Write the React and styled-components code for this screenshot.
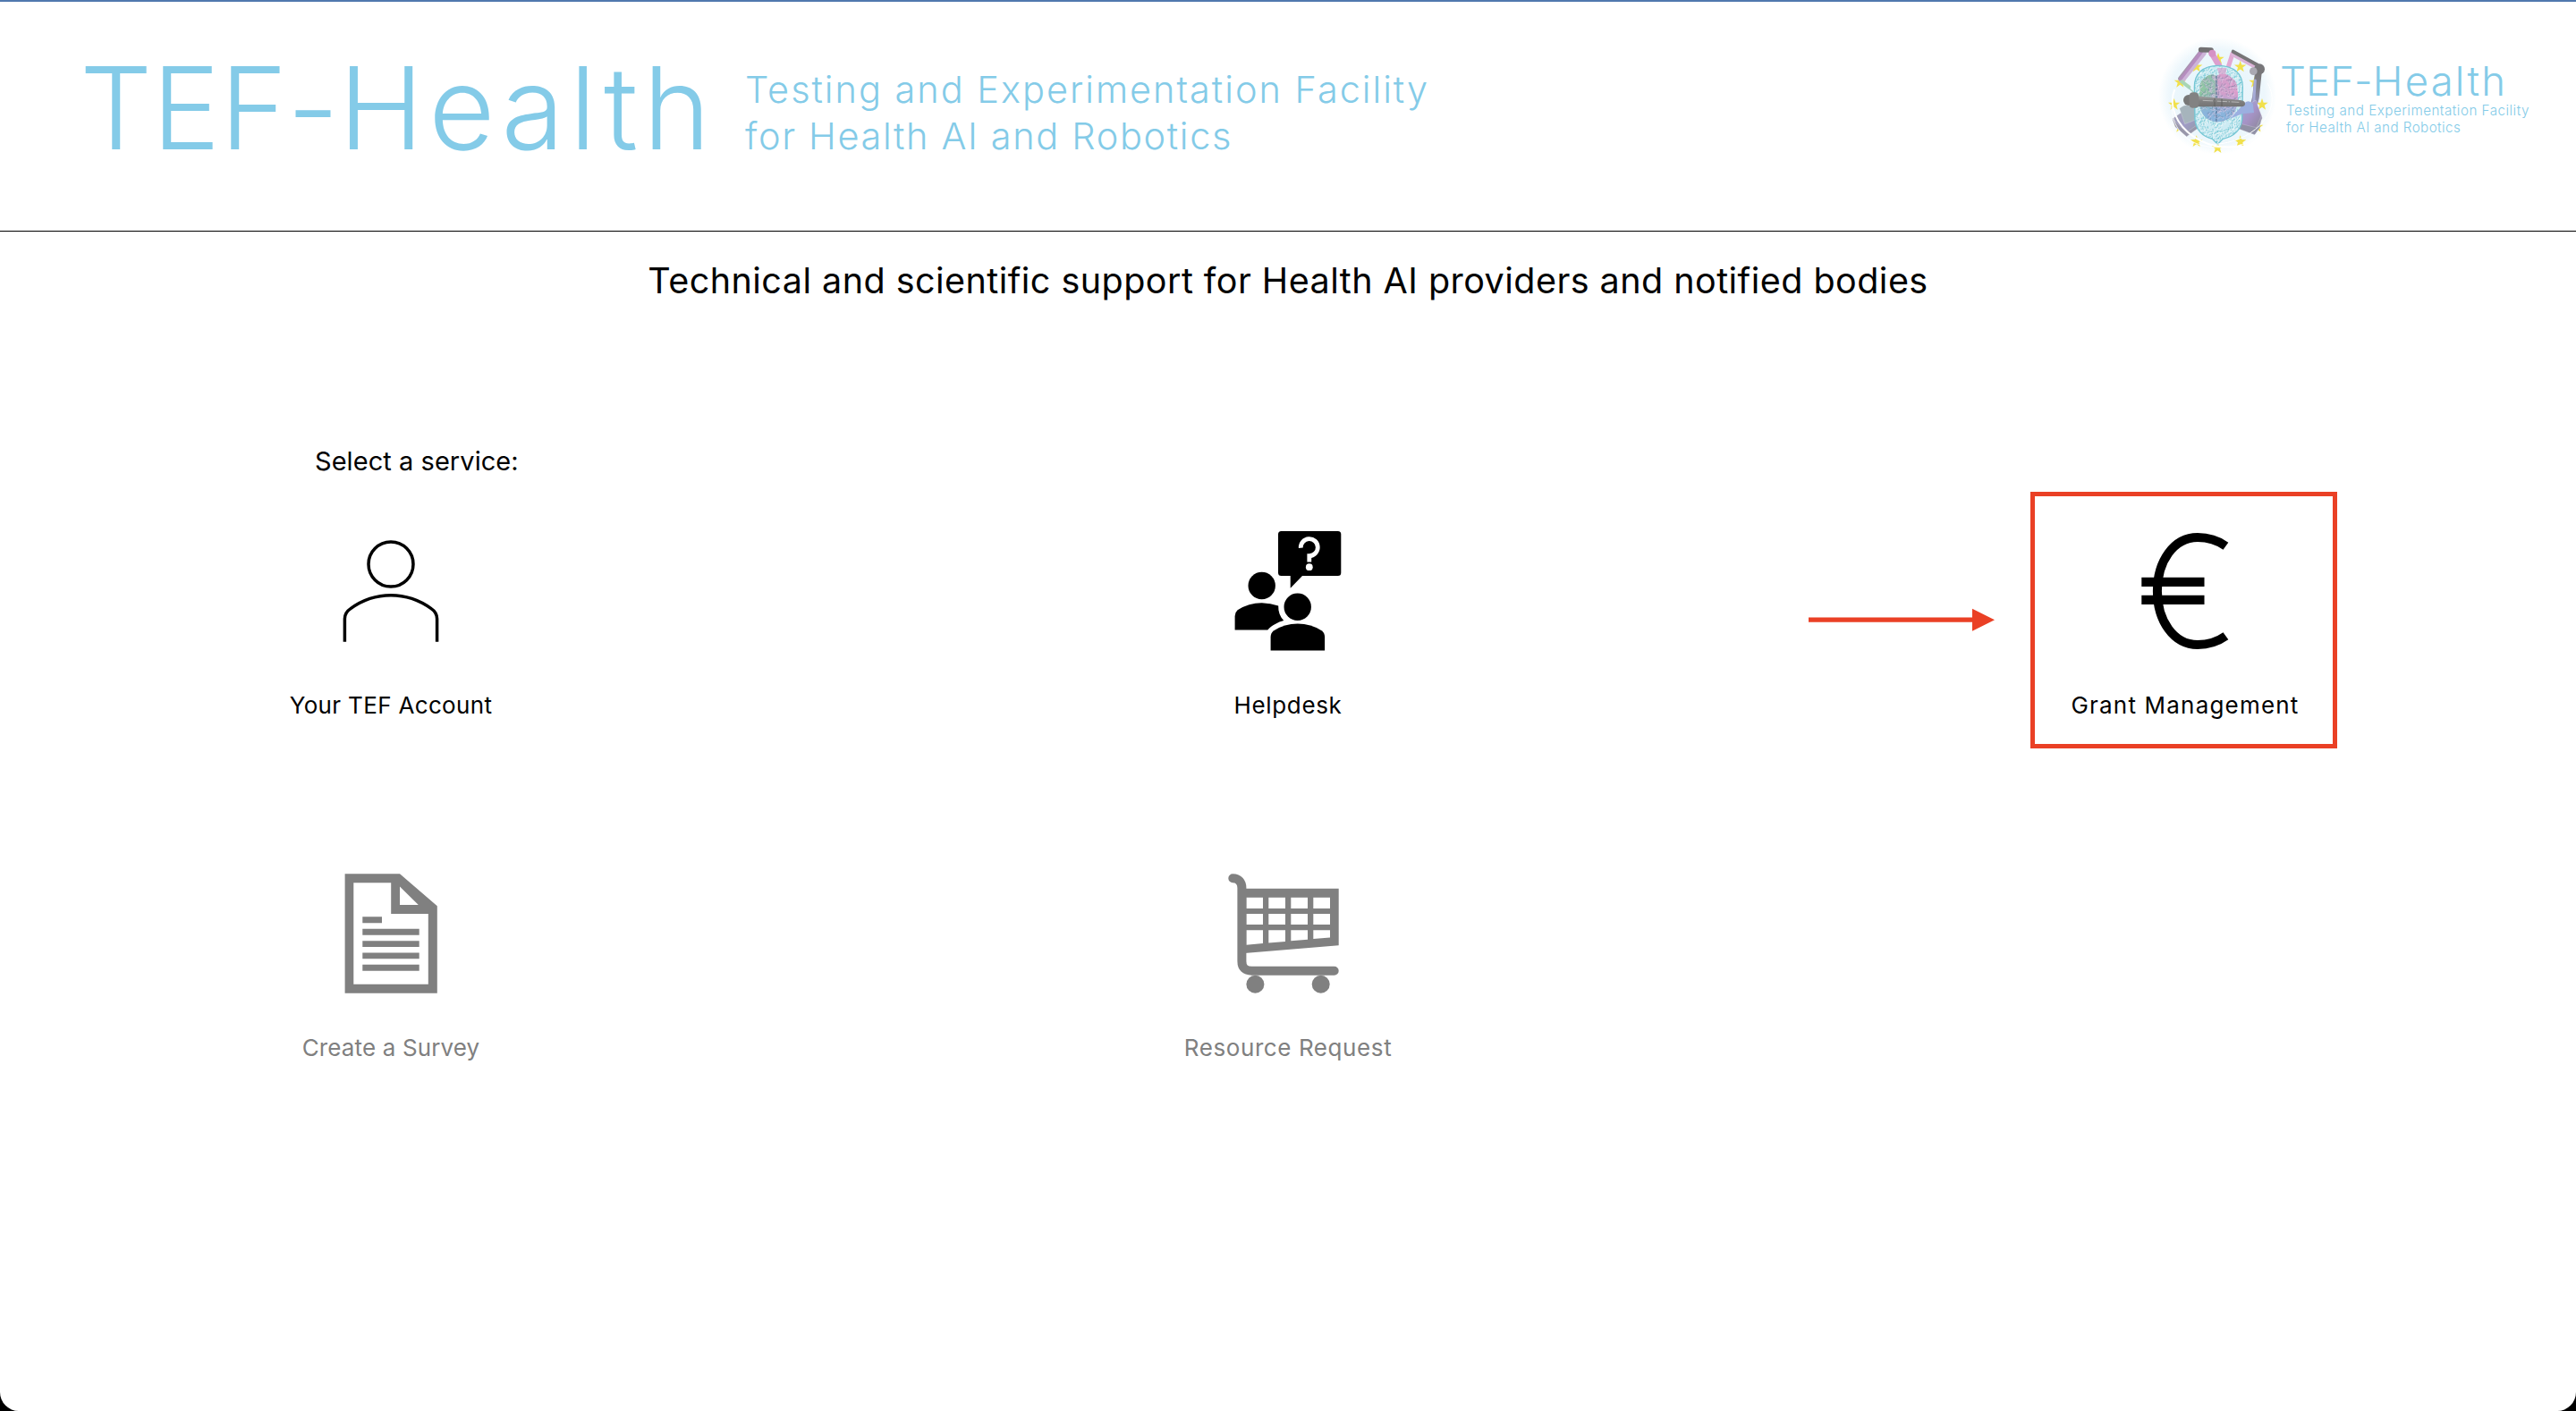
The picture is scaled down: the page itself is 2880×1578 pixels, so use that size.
import React from "react";
import styled, { createGlobalStyle } from "styled-components";

const GlobalStyle = createGlobalStyle`
  * { box-sizing: border-box; }
  body { margin: 0; background: #000; }
`;

const Page = styled.div`
  height: 1578px;
  overflow: hidden;
  background: #fff;
  border-top: 2px solid #5078ae;
  border-radius: 0 0 21px 21px;
  color: #000;
  font-family: Inter, "Liberation Sans", sans-serif;
`;

const Header = styled.header`
  display: flex;
  justify-content: space-between;
  align-items: flex-start;
  height: 257px;
  padding: 38px 50px 0 89px;
  border-bottom: 1px solid #000;
  color: #84cbe8;
  font-weight: 300;
  white-space: nowrap;
`;

const Brand = styled.div`
  display: flex;
  padding-top: 17px;
`;

const Wordmark = styled.div`
  width: 744px;
  font-size: 128px;
  line-height: 128px;
`;

const Tracked = styled.span`
  letter-spacing: ${(p) => p.$track}px;
`;

const Tagline = styled.div`
  padding-top: 17px;
  font-size: 41.5px;
  line-height: 52px;
`;

const Line = styled.div`
  letter-spacing: ${(p) => p.$track}px;
`;

const Logo = styled.div`
  display: flex;
  flex: 0 0 420px;
`;

const EmblemSvg = styled.svg`
  flex: none;
  width: 140px;
  height: 136px;
`;

const LogoText = styled.div`
  padding-top: 28px;
  margin-left: -1px;
`;

const LogoName = styled.div`
  font-size: 45.5px;
  line-height: 46px;
`;

const LogoTagline = styled.div`
  padding: 1px 0 0 7px;
  font-size: 15.2px;
  line-height: 18.7px;
`;

const Title = styled.h1`
  margin: 25px 0 0;
  font-size: 39.5px;
  font-weight: 400;
  line-height: 60px;
  letter-spacing: 0.46px;
  text-align: center;
`;

const Prompt = styled.p`
  margin: 152px 0 0 352px;
  font-size: 29px;
  line-height: 40px;
  letter-spacing: 0.05px;
`;

const Services = styled.main`
  display: grid;
  grid-template-columns: repeat(3, 300px);
  justify-content: space-between;
  row-gap: 156px;
  margin-top: 44px;
  padding: 0 287px;
`;

const Service = styled.div`
  position: relative;
  display: flex;
  flex-direction: column;
  align-items: center;
  gap: 31px;
  color: ${(p) => (p.$disabled ? "#808080" : "#000")};
`;

const ServiceIcon = styled.svg`
  width: 160px;
  height: 160px;
  fill: currentColor;
`;

const Label = styled.div`
  font-size: 26px;
  line-height: 36px;
  letter-spacing: ${(p) => p.$track}px;
  white-space: nowrap;
`;

const Highlight = styled.div`
  position: absolute;
  left: -23px;
  top: -30px;
  width: 343px;
  height: 287px;
  border: 5px solid #ea4025;
`;

const Arrow = styled.svg`
  position: absolute;
  left: -271px;
  top: 100px;
  width: 208px;
  height: 26px;
  fill: #ea4025;
`;

const STARS = [
  [210, 78], [284, 104], [333, 156], [357, 231], [341, 306], [284, 355],
  [208, 376], [137, 355], [82, 306], [62, 231], [82, 156], [137, 104],
];

function star(cx, cy, r) {
  let d = "";
  for (let i = 0; i < 10; i++) {
    const a = -Math.PI / 2 + (i * Math.PI) / 5;
    const q = i % 2 ? r * 0.4 : r;
    d += `${i ? "L" : "M"}${(cx + q * Math.cos(a)).toFixed(1)} ${(cy + q * Math.sin(a)).toFixed(1)}`;
  }
  return d + "Z";
}

function scribble(seed, count, x, y, w, h, size) {
  let s = seed;
  const rnd = () => {
    s = (s * 16807) % 2147483647;
    return s / 2147483647;
  };
  let d = "";
  for (let i = 0; i < count; i++) {
    const px = x + rnd() * w;
    const py = y + rnd() * h;
    d += `M${px.toFixed(1)} ${py.toFixed(1)}q${((rnd() - 0.5) * size).toFixed(1)} ${((rnd() - 0.5) * size).toFixed(1)} ${((rnd() - 0.5) * size).toFixed(1)} ${((rnd() - 0.5) * size).toFixed(1)}`;
  }
  return d;
}

const MESH = scribble(77, 900, 128, 98, 168, 266, 18);
const FOLDS = scribble(1234, 190, 146, 128, 132, 162, 26);
const HEAD =
  "M210 100C158 100 130 128 130 172L132 282C136 318 160 338 190 346L208 364L226 346C262 338 286 316 290 282L292 172C292 128 262 100 210 100Z";
const BRAIN =
  "M204 134C190 126 174 130 166 142C152 146 146 166 148 184C142 206 146 226 150 244C156 270 176 286 204 290C240 288 264 270 270 244C278 226 278 200 275 184C276 160 266 146 254 140C242 126 220 124 204 134Z";

function Emblem() {
  return (
    <EmblemSvg viewBox="0 0 420 408">
      <defs>
        <radialGradient id="halo">
          <stop offset="0" stopColor="#e3f3fb" />
          <stop offset="0.8" stopColor="#edf7fc" />
          <stop offset="1" stopColor="#ffffff" />
        </radialGradient>
        <linearGradient id="armLeft" x1="0" y1="0" x2="0.65" y2="0.6">
          <stop offset="0.35" stopColor="#6c6e6e" />
          <stop offset="0.62" stopColor="#9a9c9e" />
          <stop offset="0.8" stopColor="#b68cc0" />
        </linearGradient>
        <linearGradient id="armRight" x1="0" y1="0" x2="0" y2="1">
          <stop offset="0" stopColor="#777476" />
          <stop offset="0.45" stopColor="#808088" />
          <stop offset="1" stopColor="#9a94c4" />
        </linearGradient>
        <linearGradient id="bar" x1="0" y1="0" x2="0" y2="1">
          <stop offset="0" stopColor="#a4a4a4" />
          <stop offset="0.5" stopColor="#808080" />
          <stop offset="1" stopColor="#747474" />
        </linearGradient>
        <linearGradient id="baseLeft" x1="0" y1="0" x2="1" y2="1">
          <stop offset="0" stopColor="#a0a4ac" />
          <stop offset="0.5" stopColor="#a09cc6" />
          <stop offset="1" stopColor="#8f9a9c" />
        </linearGradient>
        <linearGradient id="baseRight" x1="0" y1="0" x2="1" y2="1">
          <stop offset="0" stopColor="#9db2de" />
          <stop offset="0.5" stopColor="#a693c6" />
          <stop offset="1" stopColor="#84848e" />
        </linearGradient>
        <linearGradient id="cortex" x1="0" y1="0.1" x2="1" y2="0.1">
          <stop offset="0" stopColor="#8fc9a0" />
          <stop offset="0.38" stopColor="#93bfb0" />
          <stop offset="0.5" stopColor="#cfa0cb" />
          <stop offset="1" stopColor="#dd9ccb" />
        </linearGradient>
        <linearGradient id="cortexBase" x1="0" y1="0" x2="0" y2="1">
          <stop offset="0.4" stopColor="#8ab4dc" stopOpacity="0" />
          <stop offset="0.8" stopColor="#8ab4dc" />
        </linearGradient>
        <clipPath id="headClip"><path d={HEAD} /></clipPath>
        <clipPath id="brainClip"><path d={BRAIN} /></clipPath>
      </defs>

      <ellipse cx="207" cy="202" rx="198" ry="196" fill="url(#halo)" />
      {STARS.map(([x, y]) => (
        <path key={`${x}-${y}`} d={star(x, y, 21)} fill="#f1e04c" />
      ))}

      <g fill="none" strokeLinecap="round" strokeLinejoin="round">
        <path d="M188 58L220 112" stroke="#dc9fce" strokeWidth="20" />
        <path d="M258 60L242 110" stroke="#e3a8d2" strokeWidth="15" />
        <path d="M160 58L88 148" stroke="#cdb4d8" strokeWidth="20" />
        <path d="M155 50L82 144" stroke="url(#armLeft)" strokeWidth="14" />
        <path d="M152 47L186 48" stroke="#737173" strokeWidth="17" />
        <path d="M88 154L112 172" stroke="#a9d5b4" strokeWidth="12" />
        <path d="M110 174L130 192" stroke="#a3cfc0" strokeWidth="4" />
        <path d="M262 62L332 100" stroke="#dcb4d8" strokeWidth="18" />
        <path d="M260 53L342 98" stroke="#777577" strokeWidth="12" />
        <path d="M345 118L336 206L326 244" stroke="url(#armRight)" strokeWidth="23" />
        <path d="M334 150L329 225" stroke="#a6abd6" strokeWidth="9" />
      </g>
      <circle cx="190" cy="59" r="12" fill="#d692c5" />
      <circle cx="348" cy="112" r="18" fill="#777679" />
      <circle cx="328" cy="119" r="13" fill="#aaa9b2" />

      <g stroke="#ffffff" strokeOpacity="0.3" strokeWidth="2">
        <path d="M56 278L112 240L152 290L104 338Z" fill="url(#baseLeft)" />
        <path d="M56 278L66 306L104 338L148 306L152 290L104 324Z" fill="#9897aa" />
        <path d="M80 244Q106 220 136 246L134 282L98 296Z" fill="#a6b4bc" />
        <path d="M286 246L336 216L358 276L334 330L270 306Z" fill="url(#baseRight)" />
        <path d="M270 292L338 308L356 264L350 308L332 332L268 308Z" fill="#9191a6" />
      </g>

      <g clipPath="url(#headClip)">
        <path d={HEAD} fill="#cdebf3" />
        <path d={MESH} fill="none" stroke="#6dc6d3" strokeWidth="2" />
        <path d={MESH} fill="none" stroke="#ffffff" strokeWidth="2" strokeOpacity="0.65" transform="translate(4 3)" />
      </g>
      <path d={HEAD} fill="none" stroke="#74c6d4" strokeWidth="4" />
      <g clipPath="url(#brainClip)">
        <path d={BRAIN} fill="url(#cortex)" />
        <path d={BRAIN} fill="url(#cortexBase)" />
        <path d={FOLDS} fill="none" stroke="#667d9c" strokeWidth="2" strokeOpacity="0.5" />
        <path d={FOLDS} fill="none" stroke="#e4cdea" strokeWidth="2" strokeOpacity="0.7" transform="translate(3 4)" />
      </g>
      <path d="M204 136V288" stroke="#486c91" strokeWidth="3" strokeDasharray="9 4" />
      <path d="M206 108L238 108L234 136L216 138Z" fill="#dca0cc" fillOpacity="0.7" />

      <path d="M250 278L298 226Q312 212 326 228L330 258L290 262Z" fill="#9bafe0" />
      <path d="M118 200L284 216Q302 218 300 230Q298 238 284 238L118 238Z" fill="url(#bar)" />
      <path d="M158 217L280 223" stroke="#b7b7b7" strokeWidth="3" strokeDasharray="34 5 4 5" />
      <path d="M198 210V238M222 212V238" stroke="#606060" strokeWidth="3" />
      <circle cx="111" cy="216" r="18" fill="#777777" />
      <rect x="112" y="190" width="33" height="52" rx="13" fill="#828282" />

      <g fill="none" stroke="#ffffff">
        <path d="M64 180C42 232 68 300 130 340S250 376 306 370" strokeWidth="6" />
        <path d="M54 240C58 320 110 360 166 370S330 380 362 304" strokeWidth="2.5" />
        <path d="M376 160C404 210 390 260 350 300S256 360 200 364" strokeWidth="3" />
      </g>
    </EmblemSvg>
  );
}

function AccountIcon() {
  return (
    <ServiceIcon viewBox="0 0 160 160">
      <g fill="none" stroke="currentColor" strokeWidth="3.5">
        <circle cx="80" cy="51" r="25" />
        <path d="M28.4 137.7V112Q28.4 105 35 100.6C47 92 62 85.8 80 85.8S113 92 125.1 100.6Q131.6 105 131.6 112V137.7" />
      </g>
    </ServiceIcon>
  );
}

function HelpdeskIcon() {
  return (
    <ServiceIcon viewBox="0 0 160 160">
      <path d="M72.5 14H135.8Q139.3 14 139.3 17.5V60.5Q139.3 64 135.8 64H96L82.7 77.7V64H72.5Q69 64 69 60.5V17.5Q69 14 72.5 14Z" />
      <path d="M94.3 32.8A9.5 9.5 0 1 1 103.8 41.6V48.5" fill="none" stroke="#fff" strokeWidth="4.8" />
      <circle cx="103.8" cy="54.2" r="3.9" fill="#fff" />
      <circle cx="50.7" cy="75" r="15.2" />
      <circle cx="90.7" cy="98.7" r="15.2" />
      <path d="M60.6 147.4V132.5Q60.6 128 63.8 125.5Q76 117.6 90.8 117.6T118 125.5Q121.1 128 121.1 132.5V147.4Z" />
      <path d="M20.6 124.4V109Q20.6 105 23.6 102.3Q36 94.3 50.7 94.3Q60.5 94.4 69.2 97.6C69 104 71 109.6 75.2 114C69 115.6 62 119.3 57.3 124.4Z" />
    </ServiceIcon>
  );
}

function EuroIcon() {
  return (
    <ServiceIcon viewBox="0 0 160 160">
      <path
        d="M125.4 30.7C116 24 106 21 94 21C67 21 48.9 48 48.9 81S67 141 94 141C106 141 116 138 125.4 131.3"
        fill="none"
        stroke="currentColor"
        strokeWidth="10"
      />
      <path d="M31.3 65.7H101.5V76H31.3ZM31.3 85.7H101.5V96H31.3Z" />
    </ServiceIcon>
  );
}

function SurveyIcon() {
  return (
    <ServiceIcon viewBox="0 0 160 160">
      <path
        fillRule="evenodd"
        d="M28.6 14.3H90L131.8 50.3V147.7H28.6ZM38.3 24.3V137.7H121.8V59H80.2V24.3ZM90 28.6V49H110.8Z"
      />
      <path d="M48.3 62.3H70V69.2H48.3ZM48.3 75.8H111.7V82.7H48.3ZM48.3 89.2H111.7V96H48.3ZM48.3 102.4H111.7V109.3H48.3ZM48.3 115.8H111.7V122.7H48.3Z" />
    </ServiceIcon>
  );
}

function CartIcon() {
  return (
    <ServiceIcon viewBox="0 0 160 160">
      <path
        d="M18.3 19.3C25 19.3 28.4 24 28.4 30V112Q28.4 122.7 39.5 122.7H131.7"
        fill="none"
        stroke="currentColor"
        strokeWidth="10"
        strokeLinecap="round"
      />
      <path
        fillRule="evenodd"
        d="M28.4 30.8H136.7V94.2L28.4 103.3ZM33.4 40.8V53H52V40.8ZM58.3 40.8V53H77V40.8ZM83.3 40.8V53H102V40.8ZM108.3 40.8V53H127V40.8ZM33.4 59V71H52V59ZM58.3 59V71H77V59ZM83.3 59V71H102V59ZM108.3 59V71H127V59ZM33.4 77.2V93.8L52 92.1V77.2ZM58.3 77.2V91.5L77 89.9V77.2ZM83.3 77.2V89.3L102 87.7V77.2ZM108.3 77.2V87.1L127 85.4V77.2Z"
      />
      <circle cx="43.4" cy="137.7" r="10" />
      <circle cx="116.7" cy="137.7" r="10" />
    </ServiceIcon>
  );
}

const SERVICES = [
  { label: "Your TEF Account", Icon: AccountIcon, track: 0.33 },
  { label: "Helpdesk", Icon: HelpdeskIcon, track: 0.65 },
  { label: "Grant Management", Icon: EuroIcon, track: 1.19, highlighted: true },
  { label: "Create a Survey", Icon: SurveyIcon, track: 0.14, disabled: true },
  { label: "Resource Request", Icon: CartIcon, track: 0.59, disabled: true },
];

export default function App() {
  return (
    <>
      <GlobalStyle />
      <Page>
        <Header>
          <Brand>
            <Wordmark>
              <Tracked $track={-0.3}>TEF-</Tracked>
              <Tracked $track={5.9}>Health</Tracked>
            </Wordmark>
            <Tagline>
              <Line $track={1.97}>Testing and Experimentation Facility</Line>
              <Line $track={1.64}>for Health AI and Robotics</Line>
            </Tagline>
          </Brand>
          <Logo>
            <Emblem />
            <LogoText>
              <LogoName>
                <Tracked $track={0.1}>TEF-</Tracked>
                <Tracked $track={2.2}>Health</Tracked>
              </LogoName>
              <LogoTagline>
                <Line $track={0.497}>Testing and Experimentation Facility</Line>
                <Line $track={0.439}>for Health AI and Robotics</Line>
              </LogoTagline>
            </LogoText>
          </Logo>
        </Header>
        <Title>Technical and scientific support for Health AI providers and notified bodies</Title>
        <Prompt>Select a service:</Prompt>
        <Services>
          {SERVICES.map(({ label, Icon, track, highlighted, disabled }) => (
            <Service key={label} $disabled={disabled}>
              {highlighted && <Highlight />}
              {highlighted && (
                <Arrow viewBox="0 0 208 26">
                  <path d="M0 10.4H183V0.7L208 13.3L183 25.7V15.7H0Z" />
                </Arrow>
              )}
              <Icon />
              <Label $track={track}>{label}</Label>
            </Service>
          ))}
        </Services>
      </Page>
    </>
  );
}
